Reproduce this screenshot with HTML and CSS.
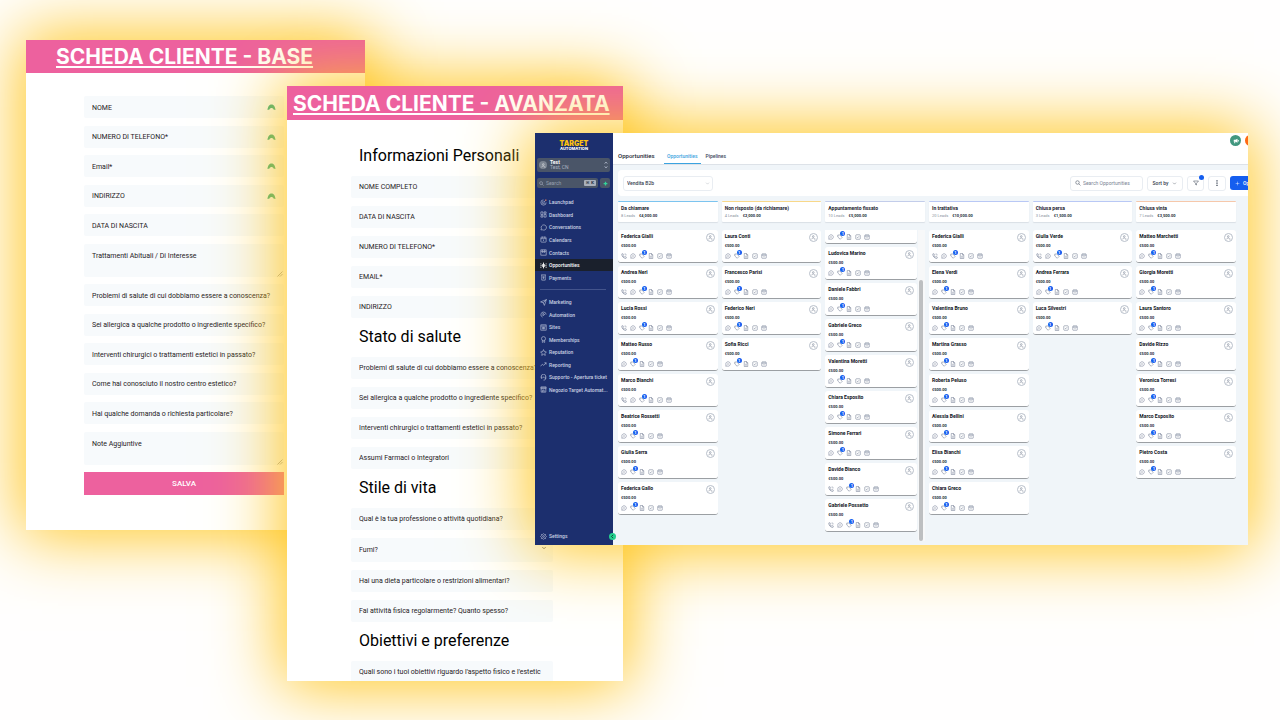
FILE: index.html
```html
<!DOCTYPE html>
<html lang="it">
<head>
<meta charset="utf-8">
<title>Scheda cliente e opportunità</title>
<link rel="stylesheet" href="styles.css">
</head>
<body>
<svg class="sprite" aria-hidden="true">
  <symbol id="wave" viewBox="0 0 16 14"><path d="M0 12C1 4 4 1 8 1s7 3 8 11l-4-1c-1-4-7-4-8 0z" fill="#35ad82"/></symbol>
  <symbol id="phone" viewBox="0 0 24 24"><path d="M4 3h4l2 6-3 2c1 3 3 5 6 6l2-3 6 2v4c0 1-1 2-3 2C10 21 3 13 3 5c0-1 0-2 1-2zM15 3c3 0 6 3 6 6M15 7l2 2"/></symbol>
  <symbol id="chat" viewBox="0 0 24 24"><path d="M12 3a9 9 0 1 1-4 17l-5 1 1-5A9 9 0 0 1 12 3zM8 12h8"/></symbol>
  <symbol id="tag" viewBox="0 0 24 24"><path d="M3 4h8l10 9-8 8L3 12zM7 8h1"/></symbol>
  <symbol id="doc" viewBox="0 0 24 24"><path d="M5 2h9l5 5v15H5zM14 2v6h5M9 13h6M9 17h6"/></symbol>
  <symbol id="check" viewBox="0 0 24 24"><rect x="3" y="3" width="18" height="18" rx="3"/><path d="M8 12l3 3 5-6"/></symbol>
  <symbol id="cal" viewBox="0 0 24 24"><rect x="3" y="4" width="18" height="17" rx="2"/><path d="M3 9h18M8 2v4M16 2v4M12 12v5"/></symbol>
  <symbol id="person" viewBox="0 0 24 24"><circle cx="11" cy="7" r="4"/><path d="M3 21c1-9 12-9 14-3M15 20h7"/></symbol>
  <symbol id="search" viewBox="0 0 24 24"><circle cx="10" cy="10" r="7"/><path d="M15 15l7 7"/></symbol>
  <symbol id="down" viewBox="0 0 24 24"><path d="M5 8l7 7 7-7"/></symbol>
  <symbol id="funnel" viewBox="0 0 24 24"><path d="M2 4h20l-8 9v7l-4-2v-5z"/></symbol>
  <symbol id="dots" viewBox="0 0 24 24"><path d="M12 1v5M12 10v5M12 19v5" stroke-width="5"/></symbol>
  <symbol id="plus" viewBox="0 0 24 24"><path d="M12 3v18M3 12h18"/></symbol>
  <symbol id="rocket" viewBox="0 0 24 24"><path d="M12 3a9 9 0 1 0 9 9M12 8a4 4 0 1 0 4 4M12 12l8-8"/><circle cx="20" cy="4" r="2" stroke="#e57a5a"/></symbol>
  <symbol id="dash" viewBox="0 0 24 24"><path d="M3 3h7v9H3zM14 3h7v5h-7zM14 12h7v9h-7zM3 16h7v5H3z"/></symbol>
  <symbol id="bubble" viewBox="0 0 24 24"><path d="M13 3a9 9 0 1 1-4 17H3l2-4A9 9 0 0 1 13 3z"/></symbol>
  <symbol id="contacts" viewBox="0 0 24 24"><rect x="3" y="3" width="18" height="18"/><path d="M3 8h18M8 3v9l4-2 4 2V3"/></symbol>
  <symbol id="people" viewBox="0 0 24 24"><path d="M12 2v20M8 9h8v6H8zM3 5v3M21 5v3M2 12h3M19 12h3M3 16v4M21 16v4" stroke-width="3"/></symbol>
  <symbol id="pay" viewBox="0 0 24 24"><path d="M4 3h16M6 3v18h12V3M9 8h6M9 12h6M12 12v5"/></symbol>
  <symbol id="send" viewBox="0 0 24 24"><path d="M2 10l20-8-7 20-4-9zM11 13L22 2"/></symbol>
  <symbol id="auto" viewBox="0 0 24 24"><path d="M21 12A9 9 0 1 0 9 21M10 8l6 4-6 4z"/></symbol>
  <symbol id="sites" viewBox="0 0 24 24"><rect x="3" y="3" width="18" height="18"/><path d="M3 7h18M8 17v-6h8v6zM12 11v6"/></symbol>
  <symbol id="award" viewBox="0 0 24 24"><circle cx="12" cy="9" r="7"/><path d="M8 15v7l4-2 4 2v-7"/></symbol>
  <symbol id="star" viewBox="0 0 24 24"><path d="M12 2l3 7 7 1-5 5 1 7-6-4-6 4 1-7-5-5 7-1z"/></symbol>
  <symbol id="trend" viewBox="0 0 24 24"><path d="M2 18l6-7 5 4 8-9M15 6h6v6"/></symbol>
  <symbol id="support" viewBox="0 0 24 24"><path d="M4 14V9a8 8 0 0 1 16 0v5c0 5-3 7-8 7M4 10h3v5H4M20 10h-3v5h3M12 9v4"/></symbol>
  <symbol id="shop" viewBox="0 0 24 24"><path d="M3 3h18v6H3zM4 9v12h16V9M9 21v-7h5v7M3 6h18"/></symbol>
  <symbol id="gear" viewBox="0 0 24 24"><circle cx="12" cy="12" r="3"/><path d="M12 2l3 3h4v4l3 3-3 3v4h-4l-3 3-3-3H5v-4l-3-3 3-3V5h4z"/></symbol>
  <symbol id="updown" viewBox="0 0 12 24"><path d="M2 8l4-5 4 5M2 16l4 5 4-5"/></symbol>
  <symbol id="horn" viewBox="0 0 24 24"><path d="M3 7h7l8-4v16l-8-4H3z" fill="#fff" stroke="none"/><path d="M7 14v7M21 8v6" stroke-width="4"/></symbol>
  <symbol id="left" viewBox="0 0 24 24"><path d="M15 4l-8 8 8 8" stroke-width="4"/></symbol>
  <symbol id="grip" viewBox="0 0 12 12"><path d="M1 11L11 1M6 11l5-5"/></symbol>
</svg>

<main class="stage">
  <section class="sheet base">
    <h1 class="banner">SCHEDA CLIENTE - BASE</h1>
    <form class="base-form">
      <div class="row"><input class="field" aria-label="Nome" placeholder="NOME"><svg class="mark"><use href="#wave"/></svg></div>
      <div class="row"><input class="field" aria-label="Numero di telefono" placeholder="NUMERO DI TELEFONO*"><svg class="mark"><use href="#wave"/></svg></div>
      <div class="row"><input class="field" aria-label="Email" placeholder="Email*"><svg class="mark"><use href="#wave"/></svg></div>
      <div class="row"><input class="field" aria-label="Indirizzo" placeholder="INDIRIZZO"><svg class="mark"><use href="#wave"/></svg></div>
      <div class="row"><input class="field" aria-label="Data di nascita" placeholder="DATA DI NASCITA"></div>
      <div class="row"><textarea class="field area" aria-label="Trattamenti" placeholder="Trattamenti Abituali / Di Interesse"></textarea><svg class="grip"><use href="#grip"/></svg></div>
      <div class="row"><input class="field" aria-label="Problemi di salute" placeholder="Problemi di salute di cui dobbiamo essere a conoscenza?"></div>
      <div class="row"><input class="field" aria-label="Allergie" placeholder="Sei allergica a qualche prodotto o ingrediente specifico?"></div>
      <div class="row"><input class="field" aria-label="Interventi" placeholder="Interventi chirurgici o trattamenti estetici in passato?"></div>
      <div class="row"><input class="field" aria-label="Provenienza" placeholder="Come hai conosciuto il nostro centro estetico?"></div>
      <div class="row"><input class="field" aria-label="Domande" placeholder="Hai qualche domanda o richiesta particolare?"></div>
      <div class="row"><textarea class="field area" aria-label="Note" placeholder="Note Aggiuntive"></textarea><svg class="grip"><use href="#grip"/></svg></div>
      <button class="save" type="button">SALVA</button>
    </form>
  </section>

  <section class="sheet advanced">
    <h1 class="banner">SCHEDA CLIENTE - AVANZATA</h1>
    <form class="adv-form">
      <h2>Informazioni Personali</h2>
      <input class="field" aria-label="Nome completo" placeholder="NOME COMPLETO">
      <input class="field" aria-label="Data di nascita" placeholder="DATA DI NASCITA">
      <input class="field" aria-label="Numero di telefono" placeholder="NUMERO DI TELEFONO*">
      <input class="field" aria-label="Email" placeholder="EMAIL*">
      <input class="field" aria-label="Indirizzo" placeholder="INDIRIZZO">
      <h2>Stato di salute</h2>
      <input class="field" aria-label="Problemi di salute" placeholder="Problemi di salute di cui dobbiamo essere a conoscenza?">
      <input class="field" aria-label="Allergie" placeholder="Sei allergica a qualche prodotto o ingrediente specifico?">
      <input class="field" aria-label="Interventi" placeholder="Interventi chirurgici o trattamenti estetici in passato?">
      <input class="field" aria-label="Farmaci" placeholder="Assumi Farmaci o Integratori">
      <h2>Stile di vita</h2>
      <input class="field" aria-label="Professione" placeholder="Qual è la tua professione o attività quotidiana?">
      <div class="row"><select class="field choice" aria-label="Fumi?"><option>Fumi?</option></select><svg class="icon caret"><use href="#down"/></svg></div>
      <input class="field" aria-label="Dieta" placeholder="Hai una dieta particolare o restrizioni alimentari?">
      <input class="field" aria-label="Attività fisica" placeholder="Fai attività fisica regolarmente? Quanto spesso?">
      <h2>Obiettivi e preferenze</h2>
      <input class="field" aria-label="Obiettivi" placeholder="Quali sono i tuoi obiettivi riguardo l'aspetto fisico e l'estetic">
    </form>
  </section>

  <section class="crm">
    <aside class="side">
      <div class="logo"><b>TARGET</b><span>AUTOMATION</span></div>
      <button class="account" type="button"><span class="avatar"><svg class="icon"><use href="#person"/></svg></span><span class="who"><b>Test</b><span>Test, CN</span></span><svg class="icon updown"><use href="#updown"/></svg></button>
      <div class="find">
        <label class="find-box"><svg class="icon"><use href="#search"/></svg><input aria-label="Search" placeholder="Search"><kbd>⌘ K</kbd></label>
        <button class="add" type="button" aria-label="Add"><svg class="icon"><use href="#plus"/></svg></button>
      </div>
      <ul class="nav nav-top">
        <li><a href="#"><svg class="icon"><use href="#rocket"/></svg>Launchpad</a></li>
        <li><a href="#"><svg class="icon"><use href="#dash"/></svg>Dashboard</a></li>
        <li><a href="#"><svg class="icon"><use href="#bubble"/></svg>Conversations</a></li>
        <li><a href="#"><svg class="icon"><use href="#cal"/></svg>Calendars</a></li>
        <li><a href="#"><svg class="icon"><use href="#contacts"/></svg>Contacts</a></li>
        <li><a href="#" class="on"><svg class="icon"><use href="#people"/></svg>Opportunities</a></li>
        <li><a href="#"><svg class="icon"><use href="#pay"/></svg>Payments</a></li>
      </ul>
      <hr class="rule">
      <ul class="nav nav-more">
        <li><a href="#"><svg class="icon"><use href="#send"/></svg>Marketing</a></li>
        <li><a href="#"><svg class="icon"><use href="#auto"/></svg>Automation</a></li>
        <li><a href="#"><svg class="icon"><use href="#sites"/></svg>Sites</a></li>
        <li><a href="#"><svg class="icon"><use href="#award"/></svg>Memberships</a></li>
        <li><a href="#"><svg class="icon"><use href="#star"/></svg>Reputation</a></li>
        <li><a href="#"><svg class="icon"><use href="#trend"/></svg>Reporting</a></li>
        <li><a href="#"><svg class="icon"><use href="#support"/></svg>Supporto - Apertura ticket</a></li>
        <li><a href="#"><svg class="icon"><use href="#shop"/></svg>Negozio Target Automat...</a></li>
      </ul>
      <div class="nav settings"><a href="#"><svg class="icon"><use href="#gear"/></svg>Settings</a></div>
      <button class="fold" type="button" aria-label="Collapse"><svg class="icon"><use href="#left"/></svg></button>
    </aside>
    <div class="work">
      <header class="top">
        <h2>Opportunities</h2>
        <nav class="tabs"><a href="#" class="on">Opportunities</a><a href="#">Pipelines</a></nav>
        <div class="alerts"><button class="round green" type="button" aria-label="News"><svg class="icon"><use href="#horn"/></svg></button><button class="round orange" type="button" aria-label="Alerts"></button></div>
      </header>
      <div class="tools">
        <div class="pipe"><select class="box" aria-label="Pipeline"><option>Vendita B2b</option></select><svg class="icon"><use href="#down"/></svg></div>
        <label class="box seek"><svg class="icon"><use href="#search"/></svg><input aria-label="Search Opportunities" placeholder="Search Opportunities"></label>
        <button class="box sort" type="button">Sort by<svg class="icon"><use href="#down"/></svg></button>
        <button class="box filter" type="button" aria-label="Filter"><svg class="icon"><use href="#funnel"/></svg><i class="dot"></i></button>
        <button class="box more" type="button" aria-label="More"><svg class="icon"><use href="#dots"/></svg></button>
        <button class="new" type="button"><svg class="icon"><use href="#plus"/></svg>Op</button>
      </div>
      <div class="board" id="board"></div>
    </div>
  </section>
</main>
<script src="board.js"></script>
</body>
</html>
```
FILE: styles.css
```css
* { box-sizing: border-box; }
body { margin: 0; background: #fffefe; font-family: Roboto, "Liberation Sans", sans-serif; }
h1, h2, ul { margin: 0; padding: 0; font-weight: 400; }
ul { list-style: none; }
a { color: inherit; text-decoration: none; }
button, input, select, textarea { font: inherit; color: inherit; border: 0; margin: 0; padding: 0; background: none; appearance: none; outline: 0; }
.sprite { position: absolute; width: 0; height: 0; }
.icon { display: block; flex: none; width: 6px; height: 6px; fill: none; stroke: currentColor; stroke-width: 2; }

.stage { position: relative; min-height: 100vh; overflow: hidden; }
.sheet, .crm { position: absolute; background: #fff; box-shadow: 0 0 64px 6px #ffc61e; }
.sheet { overflow: hidden; }
.base { left: 26px; top: 40px; width: 339px; height: 490px; display: flex; flex-direction: column; }
.advanced { left: 287px; top: 86px; width: 336px; height: 595px; }
.banner { height: 33px; padding-left: 30px; background: #ed619e; color: #fff; font: 700 21px/33px Inter, "Open Sans", sans-serif; white-space: nowrap; text-decoration: underline; text-decoration-thickness: 2px; text-underline-offset: 2px; }
.advanced .banner { height: 34px; padding-left: 6px; line-height: 35px; }

.base-form { display: flex; flex-direction: column; justify-content: space-between; width: 200px; height: 399px; margin: 23px 0 0 58px; }
.row { position: relative; display: flex; }
.field { display: block; width: 100%; height: 22px; padding: 0 8px; background: #f7fafc; border-radius: 2px; font-size: 7px; color: #1f2124; }
.base-form .field { padding-top: 1px; }
.field::placeholder { color: #1f2124; opacity: 1; }
.base-form .area { height: 33px; padding-top: 8px; resize: none; }
.mark { position: absolute; right: 8px; top: 8px; width: 9px; height: 7px; }
.grip { position: absolute; right: 1px; bottom: 0; width: 6px; height: 6px; stroke: #555; }
.save { height: 23px; background: #ed619e; color: #fff; font-size: 8px; font-weight: 500; }

.adv-form { display: flex; flex-direction: column; gap: 8px; width: 202px; margin: 25px 0 0 64px; }
.adv-form h2 { padding-left: 8px; font-size: 16px; line-height: 22px; height: 23px; color: #000; white-space: nowrap; }
.choice { height: 24px; }
.caret { position: absolute; right: 6px; top: 7px; }

.crm { left: 535px; right: 32px; top: 133px; height: 412px; display: flex; font-size: 5px; }
.side { position: relative; z-index: 1; flex: none; width: 78px; display: flex; flex-direction: column; background: #1c2f6e; color: #c9d0e2; }
.logo { display: flex; flex-direction: column; align-items: center; margin-top: 8px; font-family: Inter, sans-serif; font-weight: 800; font-size: 4px; line-height: 4px; color: #fff; }
.logo b { font-size: 7px; line-height: 6px; color: #fcc20f; }
.account { display: flex; align-items: center; gap: 3px; height: 14px; margin: 7px 3px 0 2px; padding: 0 2px; background: #4a5568; border-radius: 2px; text-align: left; }
.avatar { display: grid; place-items: center; width: 8px; height: 8px; border-radius: 50%; background: #7c8592; color: #fff; }
.avatar .icon { width: 5px; height: 5px; }
.who { flex: 1; display: flex; flex-direction: column; line-height: 5px; color: #aab2c0; }
.who b { color: #fff; }
.account .updown { width: 4px; height: 8px; }
.find { display: flex; gap: 2px; margin: 6px 3px 0 2px; height: 10px; }
.find-box { flex: 1; min-width: 0; display: flex; align-items: center; gap: 2px; padding: 0 2px; background: #4a5568; border-radius: 2px; }
.find-box .icon { width: 5px; height: 5px; }
.find-box input { flex: 1; min-width: 0; width: 0; }
.find-box input::placeholder { color: #97a0b0; opacity: 1; }
kbd { padding: 0 2px; background: #a9b0bb; color: #2b3548; border-radius: 1px; font: 700 4px/6px "DejaVu Sans", sans-serif; }
.add { display: grid; place-items: center; width: 10px; background: #4a5568; border-radius: 2px; color: #34d399; }
.add .icon { width: 5px; height: 5px; stroke-width: 6; }
.nav a { display: flex; align-items: center; gap: 2px; height: 100%; padding-left: 5px; font-weight: 500; white-space: nowrap; }
.nav .icon { width: 7px; height: 7px; }
.nav a.on { background: #1a202c; color: #fff; }
.nav-top, .nav-more { display: grid; grid-auto-rows: 1fr; }
.nav-top { height: 88px; margin-top: 8px; }
.nav-more { height: 100px; }
.rule { width: 66px; height: 1px; margin: 5px 0 6px 5px; border: 0; background: #43548c; }
.settings { height: 12px; margin-top: auto; margin-bottom: 3px; }
.fold { position: absolute; right: -3px; bottom: 5px; display: grid; place-items: center; width: 7px; height: 7px; border-radius: 50%; background: #25d08f; color: #103a2b; }
.fold .icon { width: 5px; height: 5px; }

.work { flex: 1; min-width: 0; display: flex; flex-direction: column; background: #f0f5f9; overflow: hidden; }
.top { position: relative; display: flex; align-items: flex-end; gap: 7px; height: 32px; padding-left: 5px; background: #fff; border-bottom: 1px solid #dde2e8; }
.top h2 { min-width: 39px; padding-bottom: 4px; font-size: 6px; line-height: 8px; font-weight: 500; color: #1f2937; }
.tabs { display: flex; gap: 2px; font-weight: 500; color: #3b4657; }
.tabs a { padding: 0 3px 3px; line-height: 8px; border-bottom: 1px solid transparent; }
.tabs a.on { color: #3aa3e0; border-color: #3aa3e0; }
.alerts { position: absolute; right: -8px; top: 2px; display: flex; gap: 4px; }
.round { display: grid; place-items: center; width: 11px; height: 11px; border-radius: 50%; color: #fff; }
.green { background: #41977f; }
.orange { background: #ff6a13; }
.tools { display: flex; align-items: center; gap: 4px; height: 26px; margin: 5px 0 5px 5px; padding-left: 5px; background: #fff; border-radius: 4px 0 0 4px; font-weight: 500; color: #374151; overflow: hidden; }
.box { display: flex; align-items: center; justify-content: center; height: 15px; border: 1px solid #e9edf2; border-radius: 3px; background: #fff; }
.pipe { position: relative; width: 90px; margin-right: auto; }
.pipe .box { width: 100%; padding: 0 3px; font-size: 5px; }
.pipe .icon { position: absolute; right: 3px; top: 5px; width: 5px; height: 5px; color: #a0a7b2; }
.seek { width: 73px; justify-content: flex-start; gap: 2px; padding-left: 4px; font-weight: 400; }
.seek input { flex: 1; min-width: 0; }
.seek input::placeholder { color: #7b8494; opacity: 1; }
.sort { width: 36px; gap: 4px; }
.sort .icon { width: 5px; height: 5px; }
.filter { position: relative; width: 17px; }
.dot { position: absolute; right: -1px; top: -2px; width: 5px; height: 5px; border-radius: 50%; background: #155eef; }
.more { width: 18px; }
.new { display: flex; align-items: center; gap: 3px; width: 18px; height: 14px; padding-left: 5px; background: #155eef; color: #fff; border-radius: 3px 0 0 3px; white-space: nowrap; }
.new .icon { width: 5px; height: 5px; }

.board { flex: 1; min-height: 0; display: grid; grid-template-columns: repeat(6, minmax(0, 1fr)); gap: 4px; padding: 0 12px 4px 5px; }
.column { display: flex; flex-direction: column; min-height: 0; }
.stage-head { flex: none; height: 21px; margin-bottom: 8px; padding: 3px; background: #fff; border-top: 1px solid; border-radius: 1px; box-shadow: 0 1px 1px #d9dfe5; }
.stage-head h3 { margin: 0; font-size: 5px; line-height: 7px; font-weight: 700; color: #1b2330; white-space: nowrap; }
.stage-head p { margin: 0; display: flex; gap: 4px; color: #8a93a1; font-size: 4px; line-height: 8px; }
.stage-head b { color: #222b38; }
.lane { flex: 1; min-height: 0; display: flex; gap: 1px; }
.cards { flex: 1; min-width: 0; display: flex; flex-direction: column; gap: 3px; }
.track { display: none; }
.scrolled .track { display: flex; flex-direction: column; justify-content: flex-end; align-items: center; width: 7px; background: #f7f8f9; }
.thumb { width: 4px; height: 84%; border-radius: 2px; background: #bdbfc1; }
.card { flex: none; height: 33px; padding: 3px; background: #fff; border-bottom: 1px solid #9b9fa3; border-radius: 3px; }
.card.tail { height: 14px; padding-top: 0; border-radius: 0 0 3px 3px; }
.card-top { display: flex; justify-content: space-between; height: 9px; }
.card h4 { margin: 0; font-size: 5px; line-height: 7px; font-weight: 700; color: #0f141c; white-space: nowrap; }
.user { display: grid; place-items: center; width: 9px; height: 9px; border: 1px solid #b8bfca; border-radius: 50%; color: #5b667c; }
.user .icon { width: 5px; height: 5px; }
.card p { margin: 0; font-size: 4px; line-height: 7px; font-weight: 700; color: #222b38; }
.actions { display: flex; gap: 3px; padding-top: 4px; color: #66718a; }
.tagged { position: relative; }
.tagged i { position: absolute; left: 3px; top: -3px; width: 5px; height: 5px; border-radius: 50%; background: #155eef; color: #fff; font: 700 4px/5px Roboto, sans-serif; text-align: center; }
```
FILE: board.js
```js
// A leading "+" marks contacts that have a phone number; an empty name is a
// card scrolled so that only its action row remains in view.
const columns = [
  { title: "Da chiamare", leads: 8, total: "€4,000.00", color: "#7cc4ef", names: ["+Federica Gialli", "+Andrea Neri", "+Lucia Rossi", "Matteo Russo", "+Marco Bianchi", "Beatrice Rossetti", "Giulia Serra", "Federica Gallo"] },
  { title: "Non risposto (da richiamare)", leads: 4, total: "€2,000.00", color: "#f8d88a", names: ["Laura Conti", "Francesco Parisi", "Federico Neri", "Sofia Ricci"] },
  { title: "Appuntamento fissato", leads: 10, total: "€5,000.00", color: "#c3cdea", scrolled: true, names: ["", "Ludovica Marino", "Daniele Fabbri", "Gabriele Greco", "Valentina Moretti", "Chiara Esposito", "Simone Ferrari", "+Davide Bianco", "+Gabriele Possetto"] },
  { title: "In trattativa", leads: 20, total: "€10,000.00", color: "#b9c8f5", names: ["+Federica Gialli", "Elena Verdi", "Valentina Bruno", "Martina Grasso", "Roberta Peluso", "Alessia Bellini", "Elisa Bianchi", "Chiara Greco"] },
  { title: "Chiusa persa", leads: 3, total: "€1,500.00", color: "#b9c8f5", names: ["+Giulia Verde", "Andrea Ferrara", "Luca Silvestri"] },
  { title: "Chiusa vinta", leads: 7, total: "€3,500.00", color: "#f6c8ab", names: ["Matteo Marchetti", "Giorgia Moretti", "Laura Santoro", "Davide Rizzo", "Veronica Torresi", "Marco Esposito", "Pietro Costa"] }
];

const icon = id => `<svg class="icon"><use href="#${id}"/></svg>`;

function actions(phone) {
  return `<div class="actions">${phone ? icon("phone") : ""}${icon("chat")}<span class="tagged">${icon("tag")}<i>1</i></span>${icon("doc")}${icon("check")}${icon("cal")}</div>`;
}

function card(entry) {
  if (!entry) return `<article class="card tail">${actions(false)}</article>`;
  return `<article class="card">
    <div class="card-top"><h4>${entry.replace("+", "")}</h4><span class="user">${icon("person")}</span></div>
    <p>€500.00</p>
    ${actions(entry.startsWith("+"))}
  </article>`;
}

document.getElementById("board").innerHTML = columns.map(c => `
  <section class="column${c.scrolled ? " scrolled" : ""}">
    <header class="stage-head" style="border-top-color:${c.color}"><h3>${c.title}</h3><p>${c.leads} Leads <b>${c.total}</b></p></header>
    <div class="lane"><div class="cards">${c.names.map(card).join("")}</div><div class="track"><div class="thumb"></div></div></div>
  </section>`).join("");
```
